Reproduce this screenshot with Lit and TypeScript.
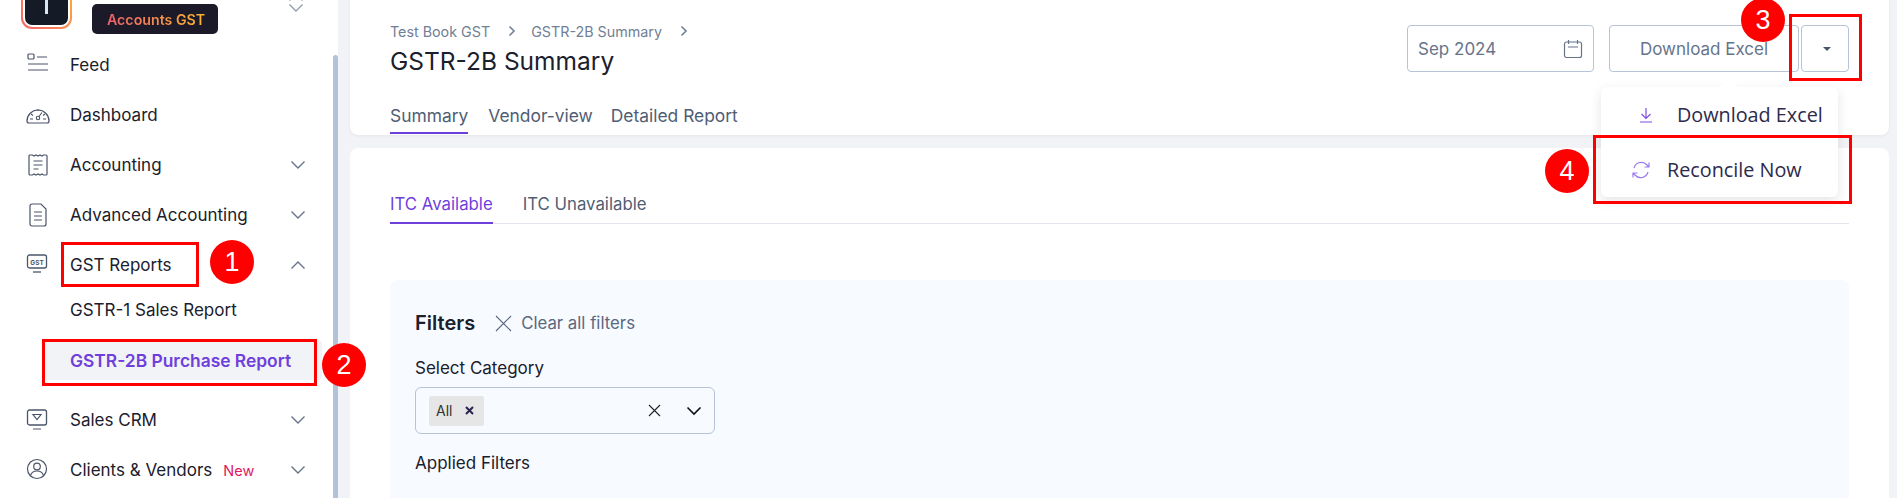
import { LitElement, html, css, svg } from 'lit';
import { customElement } from 'lit/decorators.js';

const chevronDown = html`<svg class="chev" width="16" height="10" viewBox="0 0 16 10"><path d="M1.5 1.5 8 8l6.5-6.5" fill="none" stroke="#66748a" stroke-width="1.4"/></svg>`;
const chevronUp = html`<svg class="chev" width="16" height="10" viewBox="0 0 16 10"><path d="M1.5 8.5 8 2l6.5 6.5" fill="none" stroke="#66748a" stroke-width="1.4"/></svg>`;
const crumbArrow = html`<svg width="8" height="12" viewBox="0 0 8 12"><path d="M1.5 1.5 6 6l-4.5 4.5" fill="none" stroke="#718096" stroke-width="1.6"/></svg>`;

const icons: Record<string, unknown> = {
  feed: svg`<rect x="2" y="1" width="6" height="5" rx="1" fill="none" stroke="#4a5568" stroke-width="1.2"/><path d="M11 4h10M2 11h20M2 17h20" fill="none" stroke="#4a5568" stroke-width="1.2"/>`,
  dash: svg`<path d="M3 20h18a2 2 0 0 0 2-2 11 11 0 0 0-22 0 2 2 0 0 0 2 2z" fill="none" stroke="#4a5568" stroke-width="1.2"/><circle cx="12" cy="15" r="1.7" fill="none" stroke="#4a5568" stroke-width="1.1"/><path d="M13 13.5l3-4M12 6v2M5 11l2 1.500M19 11l-2 1.500M4 16h3M17 16h3" fill="none" stroke="#4a5568" stroke-width="1.1"/>`,
  acct: svg`<path d="M4 2h2.500l1.500 1 2-1 2 1 2-1 2 1 1.500-1H20a1 1 0 0 1 1 1v18a1 1 0 0 1-1 1h-2.500l-1.500-1-2 1-2-1-2 1-2-1-1.500 1H4a1 1 0 0 1-1-1V3a1 1 0 0 1 1-1z" fill="none" stroke="#4a5568" stroke-width="1.2"/><path d="M7.500 8h9M7.500 12h9M7.500 16h5" fill="none" stroke="#4a5568" stroke-width="1.2"/>`,
  adv: svg`<path d="M6 1h9l5 5v15a2 2 0 0 1-2 2H6a2 2 0 0 1-2-2V3a2 2 0 0 1 2-2z" fill="none" stroke="#4a5568" stroke-width="1.2"/><path d="M8 9h8M8 13h8M8 17h8" fill="none" stroke="#4a5568" stroke-width="1.2"/>`,
  gst: svg`<rect x="1.500" y="2" width="19" height="13" rx="2" fill="none" stroke="#4a5568" stroke-width="1.3"/><path d="M7 19h8" stroke="#4a5568" stroke-width="1.3"/><text x="11" y="11.500" text-anchor="middle" font-size="6.500" font-weight="700" font-family="Inter, sans-serif" fill="#4a5568">GST</text>`,
  crm: svg`<rect x="1.500" y="2" width="19" height="15" rx="2" fill="none" stroke="#4a5568" stroke-width="1.3"/><path d="M7 6.500h8l-4 5zM7 21h8" fill="none" stroke="#4a5568" stroke-width="1.200"/>`,
  user: svg`<circle cx="11" cy="11" r="9.500" fill="none" stroke="#4a5568" stroke-width="1.2"/><circle cx="11" cy="8.500" r="3.300" fill="none" stroke="#4a5568" stroke-width="1.2"/><path d="M4.500 17.500c1-3.300 3.500-4.500 6.500-4.500s5.500 1.200 6.500 4.500" fill="none" stroke="#4a5568" stroke-width="1.2"/>`,
};

@customElement('side-nav')
class SideNav extends LitElement {
  static styles = css`
    :host { display: block; width: 338px; height: 498px; background: #fff; overflow: hidden; position: relative; flex: none; }
    .brand { display: flex; height: 40px; padding-left: 21px; box-sizing: border-box; position: relative; }
    .logo { width: 51px; height: 51px; margin-top: -22px; border-radius: 11px; padding: 2px; box-sizing: border-box; background: linear-gradient(45deg, #f6606e, #fdbb2d); flex: none; }
    .logo-in { width: 100%; height: 100%; box-sizing: border-box; border: 2px solid #fff; border-radius: 9px; background: #141b26; display: flex; justify-content: center; }
    .logo-bar { width: 3px; height: 32px; background: #d8e6f5; }
    .org { margin: 4px 0 0 20px; width: 126px; height: 30px; border-radius: 5px; background: #1c1a28; display: flex; align-items: center; padding-left: 15px; box-sizing: border-box; font-size: 14.2px; font-weight: 600; }
    .org span { background: linear-gradient(90deg, #f0616d, #fbb52e); -webkit-background-clip: text; background-clip: text; color: transparent; }
    .updown { position: absolute; left: 288px; top: -8px; display: flex; flex-direction: column; gap: 1px; opacity: .7; }
    .row { display: flex; align-items: center; height: 50px; padding-left: 26px; color: #1a202c; font-size: 17px; }
    .ico { width: 24px; height: 24px; flex: none; margin-right: 20px; }
    .label { flex: none; }
    .new { color: #e0185f; font-size: 14.5px; margin-left: 11px; }
    .row .chev { margin-left: auto; margin-right: 32px; }
    .subs { display: flex; flex-direction: column; gap: 10px; padding-bottom: 15px; }
    .sub { height: 40px; display: flex; align-items: center; margin-left: 44px; width: 278px; padding-left: 26px; box-sizing: border-box; color: #1a202c; font-size: 17px; border-radius: 4px; }
    .sub.active { background: #f1f3f6; color: #6f3fdc; font-size: 17.4px; font-weight: 600; }
    .thumb { position: absolute; left: 333px; top: 55px; width: 5px; height: 460px; border-radius: 3px; background: #b4c2d8; }
  `;

  private row(icon: string, label: string, chev: unknown = chevronDown, extra: unknown = null) {
    return html`<div class="row"><svg class="ico" viewBox="0 0 24 24">${icons[icon]}</svg><span class="label">${label}</span>${extra}${chev}</div>`;
  }

  render() {
    return html`
      <div class="brand">
        <div class="logo"><div class="logo-in"><div class="logo-bar"></div></div></div>
        <div class="org"><span>Accounts GST</span></div>
        <div class="updown">${chevronUp}${chevronDown}</div>
      </div>
      ${this.row('feed', 'Feed', null)}
      ${this.row('dash', 'Dashboard', null)}
      ${this.row('acct', 'Accounting')}
      ${this.row('adv', 'Advanced Accounting')}
      ${this.row('gst', 'GST Reports', chevronUp)}
      <div class="subs">
        <div class="sub">GSTR-1 Sales Report</div>
        <div class="sub active">GSTR-2B Purchase Report</div>
      </div>
      ${this.row('crm', 'Sales CRM')}
      ${this.row('user', 'Clients & Vendors', chevronDown, html`<span class="new">New</span>`)}
      <div class="thumb"></div>
    `;
  }
}

@customElement('page-head')
class PageHead extends LitElement {
  static styles = css`
    :host { display: flex; justify-content: space-between; height: 135px; background: #fff; border-radius: 0 0 8px 8px; padding: 0 40px; box-sizing: border-box; box-shadow: 0 1px 3px rgba(30,40,60,.06); flex: none; }
    .crumbs { display: flex; align-items: center; height: 20px; margin-top: 21px; font-size: 14.3px; color: #718096; }
    .crumbs svg { margin: 0 15px 0 18px; }
    h1 { margin: 4px 0 0; font-size: 24.5px; line-height: 32px; font-weight: 400; color: #1a202c; }
    .tabs { display: flex; gap: 20px; margin-top: 22px; font-size: 17.4px; color: #4f5d75; }
    .tab { height: 35px; display: flex; align-items: center; box-sizing: border-box; padding-bottom: 2px; }
    .tab + .tab + .tab { margin-left: -2px; }
    .tab.on { border-bottom: 2px solid #6f3fdc; padding-bottom: 0; }
    .tools { display: flex; margin-top: 25px; height: 47px; }
    .ctl { border: 1px solid #b7c3d7; border-radius: 4px; box-sizing: border-box; height: 47px; display: flex; align-items: center; font-size: 17px; color: #66748a; background: #fff; }
    .date { width: 187px; padding: 0 10px; justify-content: space-between; margin-right: 15px; }
    .dl { width: 190px; justify-content: center; margin-right: 2px; }
    .more { width: 48px; justify-content: center; }
    .caret { width: 0; height: 0; border: 4px solid transparent; border-top: 4px solid #4a5568; border-bottom: 0; margin-left: 3px; }
  `;

  render() {
    return html`
      <div>
        <div class="crumbs">Test Book GST ${crumbArrow} GSTR-2B Summary ${crumbArrow}</div>
        <h1>GSTR-2B Summary</h1>
        <div class="tabs"><div class="tab on">Summary</div><div class="tab">Vendor-view</div><div class="tab">Detailed Report</div></div>
      </div>
      <div class="tools">
        <div class="ctl date">Sep 2024
          <svg width="20" height="20" viewBox="0 0 20 20"><rect x="1.500" y="3" width="17" height="15.500" rx="2" fill="none" stroke="#66748a" stroke-width="1.200"/><path d="M5.500 1v4M14.500 1v4M5 8h10" fill="none" stroke="#66748a" stroke-width="1.200"/></svg>
        </div>
        <div class="ctl dl">Download Excel</div>
        <div class="ctl more"><span class="caret"></span></div>
      </div>
    `;
  }
}

@customElement('itc-panel')
class ItcPanel extends LitElement {
  static styles = css`
    :host { display: block; flex: 1; background: #fff; border-radius: 8px 8px 0 0; padding: 0 40px; margin-top: 13px; min-height: 0; overflow: hidden; }
    .tabs { display: flex; gap: 30px; margin-top: 40px; height: 36px; box-sizing: border-box; border-bottom: 1px solid #e2e5ec; font-size: 16.8px; color: #4f5d75; }
    .tab { height: 36px; box-sizing: border-box; padding-top: 6px; }
    .tab.on { color: #6f3fdc; border-bottom: 2px solid #6f3fdc; }
    .filters { margin-top: 56px; height: 240px; background: #f7faff; border-radius: 8px 8px 0 0; padding: 32px 25px 0; box-sizing: border-box; }
    .head { display: flex; align-items: center; height: 22px; }
    .head b { font-size: 20px; font-weight: 600; color: #1a202c; margin-right: 20px; }
    .head span { font-size: 16.8px; color: #5a6880; margin-left: 9px; }
    .lab { font-size: 17px; color: #1a202c; line-height: 22px; }
    .cat { margin-top: 23px; }
    .sel { margin-top: 8px; width: 300px; height: 47px; box-sizing: border-box; border: 1px solid #b7c3d7; border-radius: 6px; display: flex; align-items: center; padding-left: 13px; }
    .chip { width: 55px; height: 30px; background: #e6e6e6; border-radius: 2px; display: flex; align-items: center; padding-left: 7px; box-sizing: border-box; font-size: 14px; color: #333; gap: 13px; }
    .clr { margin-left: auto; }
    .arr { margin: 0 12px 0 25px; }
    .app { margin-top: 18px; }
  `;

  render() {
    return html`
      <div class="tabs"><div class="tab on">ITC Available</div><div class="tab">ITC Unavailable</div></div>
      <div class="filters">
        <div class="head"><b>Filters</b>
          <svg width="17" height="17" viewBox="0 0 17 17"><path d="M1 1l15 15M16 1 1 16" stroke="#5a6880" stroke-width="1.100"/></svg>
          <span>Clear all filters</span>
        </div>
        <div class="lab cat">Select Category</div>
        <div class="sel">
          <div class="chip">All
            <svg width="9" height="9" viewBox="0 0 9 9"><path d="M1 1l7 7M8 1 1 8" stroke="#2a2350" stroke-width="2"/></svg>
          </div>
          <svg class="clr" width="13" height="13" viewBox="0 0 13 13"><path d="M1 1l11 11M12 1 1 12" stroke="#222" stroke-width="1.100"/></svg>
          <svg class="arr" width="16" height="10" viewBox="0 0 16 10"><path d="M1.500 1.500 8 8l6.500-6.500" fill="none" stroke="#111" stroke-width="1.600"/></svg>
        </div>
        <div class="lab app">Applied Filters</div>
      </div>
    `;
  }
}

const marks = [
  { n: 1, x: 232, y: 262 },
  { n: 2, x: 344, y: 365 },
  { n: 3, x: 1763, y: 20 },
  { n: 4, x: 1567, y: 171 },
];
const boxes = [
  { l: 61, t: 242, w: 138, h: 45 },
  { l: 42, t: 339, w: 275, h: 47 },
  { l: 1789, t: 14, w: 73, h: 67 },
  { l: 1593, t: 135, w: 259, h: 69 },
];

@customElement('app-root')
export class AppRoot extends LitElement {
  static styles = css`
    :host { display: block; position: relative; width: 1897px; height: 498px; overflow: hidden; background: #f1f3f6; font-family: Inter, "Liberation Sans", sans-serif; }
    .shell { display: flex; height: 498px; }
    main { margin-left: 12px; width: 1539px; display: flex; flex-direction: column; }
    .menu { position: absolute; left: 1601px; top: 87px; width: 237px; height: 110px; background: #fff; border-radius: 6px; box-shadow: 0 4px 12px rgba(30,40,60,.12); font-family: "Open Sans", sans-serif; font-size: 19.8px; color: #2d2a4c; display: flex; flex-direction: column; }
    .menu::before { content: ''; position: absolute; left: 119px; top: -9px; border: 9px solid transparent; border-top: 0; border-bottom-color: #fff; }
    .opt { height: 55px; display: flex; align-items: center; }
    .opt.a svg { margin: 0 24px 0 38px; }
    .opt.b svg { margin: 0 16px 0 30px; }
    .box { position: absolute; border: 3px solid #f00; box-sizing: border-box; }
    .mark { position: absolute; width: 44px; height: 44px; margin: -22px 0 0 -22px; border-radius: 50%; background: #f00; color: #fff; font: 27px/44px "Liberation Sans", sans-serif; text-align: center; }
  `;

  render() {
    return html`
      <div class="shell">
        <side-nav></side-nav>
        <main><page-head></page-head><itc-panel></itc-panel></main>
      </div>
      <div class="menu">
        <div class="opt a">
          <svg width="14" height="16" viewBox="0 0 14 16"><path d="M7 1v10M2.500 7 7 11.500 11.500 7M1 15h12" fill="none" stroke="#7c4fe0" stroke-width="1.200"/></svg>
          Download Excel
        </div>
        <div class="opt b">
          <svg width="20" height="20" viewBox="0 0 20 20"><path d="M3 8a7.500 7.500 0 0 1 13-3l2 2M17 12a7.500 7.500 0 0 1-13 3l-2-2M18 2.500V7h-4.500M2 17.500V13h4.500" fill="none" stroke="#9b7bf0" stroke-width="1.200"/></svg>
          Reconcile Now
        </div>
      </div>
      ${boxes.map((b) => html`<div class="box" style="left:${b.l}px;top:${b.t}px;width:${b.w}px;height:${b.h}px"></div>`)}
      ${marks.map((m) => html`<div class="mark" style="left:${m.x}px;top:${m.y}px">${m.n}</div>`)}
    `;
  }
}

void SideNav; void PageHead; void ItcPanel;
